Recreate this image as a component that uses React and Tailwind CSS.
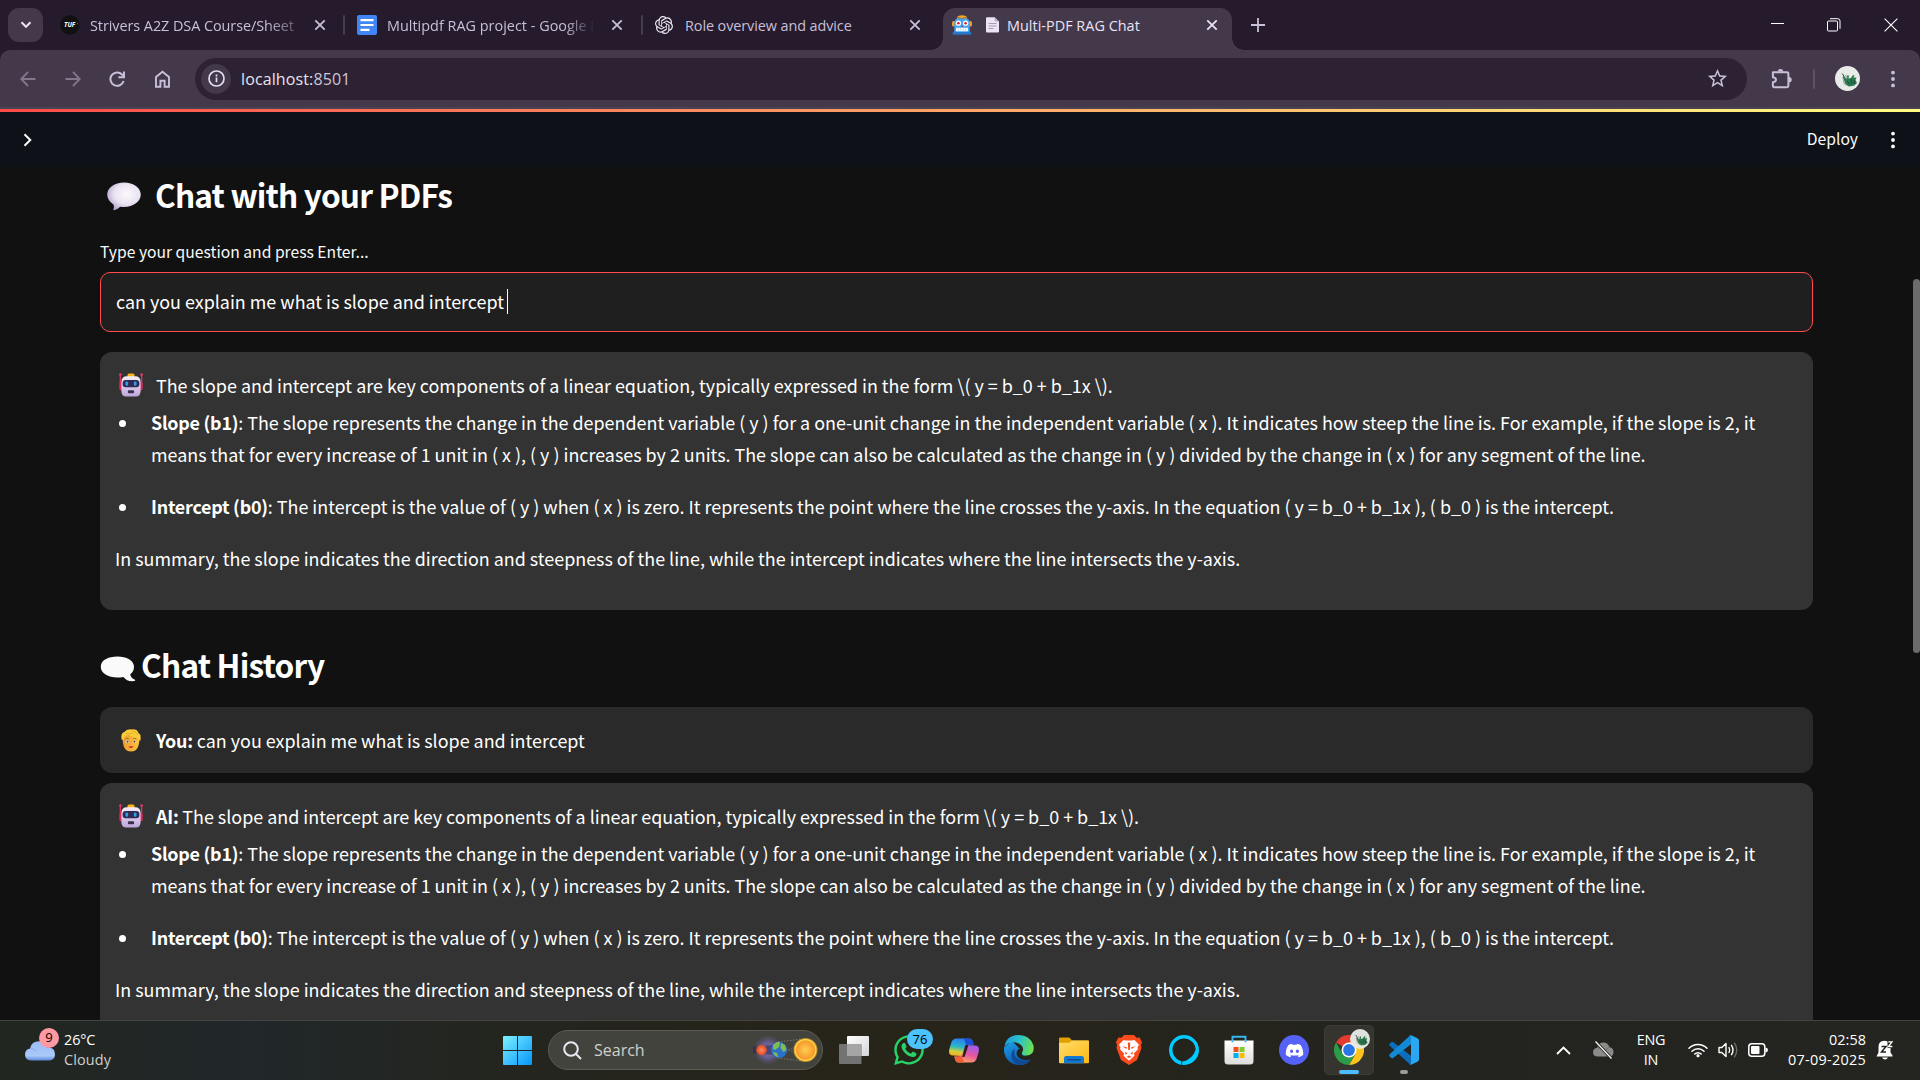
import React from "react";
import { FaDiscord, FaWhatsapp } from "react-icons/fa";
import { SiOpenai } from "react-icons/si";
import { MdStarBorder } from "react-icons/md";

const CloseX = ({ className = "" }) => (
  <svg className={`ml-auto shrink-0 ${className}`} width="12" height="12" viewBox="0 0 12 12" stroke="currentColor" strokeWidth="1.8" fill="none">
    <path d="M1.3 1.3 10.7 10.7M10.7 1.3 1.3 10.7" />
  </svg>
);

const DocsIcon = () => (
  <svg className="shrink-0" width="20" height="20" viewBox="0 0 20 20">
    <rect width="20" height="20" rx="2" fill="#4285f4" />
    <path d="M3.5 5.2h13M3.5 10h13M3.5 14.8h9" stroke="#fff" strokeWidth="2.2" />
  </svg>
);

const RobotFavicon = () => (
  <svg className="shrink-0" width="20" height="20" viewBox="0 0 20 20">
    <ellipse cx="10" cy="3" rx="5.2" ry="2.8" fill="#f2a32b" />
    <path d="M5.5 2.6q4.5 2 9 0" stroke="#5b4a35" strokeWidth=".8" fill="none" />
    <rect x="0" y="6" width="3.4" height="5.5" rx="1.6" fill="#f59a23" />
    <rect x="16.6" y="6" width="3.4" height="5.5" rx="1.6" fill="#f59a23" />
    <path d="M2.3 8q0-4.6 4-4.6h7.4q4 0 4 4.6v9H2.3z" fill="#42a5f5" />
    <path d="M.8 17h18.4v2.6H.8z" fill="#2479ce" />
    <circle cx="6.4" cy="8.2" r="2.6" fill="#fff" />
    <circle cx="13.6" cy="8.2" r="2.6" fill="#fff" />
    <circle cx="6.4" cy="8.2" r="1.3" fill="#d81b38" />
    <circle cx="13.6" cy="8.2" r="1.3" fill="#d81b38" />
    <path d="M9 12l1-1.8 1 1.8z" fill="#d81b38" />
    <rect x="4" y="12.8" width="12" height="3.4" rx=".8" fill="#fff" />
    <path d="M6.4 12.8v3.4M8.8 12.8v3.4M11.2 12.8v3.4M13.6 12.8v3.4" stroke="#8fb8dd" strokeWidth=".5" />
  </svg>
);

const PageGlyph = () => (
  <svg className="shrink-0" width="13" height="16" viewBox="0 0 13 16">
    <path d="M0 1.2Q0 .3 1 .3h7.6L13 4.6v9.8q0 1-1 1H1q-1 0-1-1z" fill="#ece4f4" />
    <path d="M8.6.3 13 4.6H8.6z" fill="#b9acc8" />
    <path d="M2.5 6.5h8M2.5 9h8M2.5 11.5h5" stroke="#a799b8" strokeWidth="1" />
  </svg>
);

const Avatar = ({ size }) => (
  <svg className="shrink-0" width={size} height={size} viewBox="0 0 25 25">
    <circle cx="12.5" cy="12.5" r="12.5" fill="#e9ebe9" />
    <path d="M10.5 18.500 8.800 14 7.500 11 9.500 10.500 11.500 13 12.500 9 14 9.800 13.500 12.500 16 12 17.500 9.500 19.500 9 18.500 11.500 21.500 11.500 20.500 14 22 17 19 19.800 14 20.500z" fill="#2c7a50" />
    <path d="M7 7.500q1.500 1 2 3.500M16 13l1 5M12 15l3 3.500M19 14l.5 4" stroke="#174c36" strokeWidth="1" fill="none" />
    <path d="M8.200 12.500l.8 4.500 2 2M10.500 9l1.500 3" stroke="#a0b0a8" strokeWidth="1.200" fill="none" />
  </svg>
);

const Dots = ({ className = "" }) => (
  <svg className={className} width="6" height="20" viewBox="0 0 6 20" fill="currentColor">
    <circle cx="3" cy="3.6" r="1.9" />
    <circle cx="3" cy="10" r="1.9" />
    <circle cx="3" cy="16.4" r="1.9" />
  </svg>
);

function TabStrip() {
  return (
    <div className="flex h-[50px] items-center bg-[#251b2d] pl-2 text-[14.4px] leading-5 text-[#cabfd8]">
      <div className="flex h-[34px] w-[35px] items-center justify-center rounded-[11px] bg-[#43394b]">
        <svg width="12" height="8" viewBox="0 0 12 8" fill="none" stroke="#eadff5" strokeWidth="2.1">
          <path d="M1.5 1.3 6 5.8l4.5-4.5" />
        </svg>
      </div>
      <div className="ml-[17px] flex w-[283px] items-center pr-[17px]">
        <svg className="shrink-0" width="20" height="20" viewBox="0 0 20 20">
          <circle cx="10" cy="10" r="9.8" fill="#111" />
          <text x="9.6" y="12.3" textAnchor="middle" fontSize="6.4" fontWeight="700" fontStyle="italic" fill="#fff" fontFamily="Open Sans">TUF</text>
          <path d="M17.3 8.2l1 1" stroke="#e0413a" strokeWidth="1" />
        </svg>
        <span className="ml-[10px] w-[206px] overflow-hidden whitespace-nowrap pt-px tracking-[-0.05px] [mask-image:linear-gradient(90deg,#000_85%,rgba(0,0,0,.35)_100%)]">Strivers A2Z DSA Course/Sheet</span>
        <CloseX />
      </div>
      <div className="h-5 w-[2px] rounded bg-[#463c50]" />
      <div className="flex w-[296px] items-center pl-[12px] pr-[18px]">
        <DocsIcon />
        <span className="ml-[10px] w-[208px] overflow-hidden whitespace-nowrap pt-px tracking-[0.02px] [mask-image:linear-gradient(90deg,#000_85%,transparent_100%)]">Multipdf RAG project - Google Docs</span>
        <CloseX />
      </div>
      <div className="h-5 w-[2px] rounded bg-[#463c50]" />
      <div className="flex w-[300px] items-center pl-[12px] pr-[22px]">
        <SiOpenai className="size-[18px] shrink-0 text-[#efeaf4]" />
        <span className="ml-[12px] whitespace-nowrap pt-px tracking-[-0.08px]">Role overview and advice</span>
        <CloseX />
      </div>
      <div className="relative mt-2 flex h-[42px] w-[289px] items-center rounded-t-[12px] bg-[#43394b] pb-2 pl-[9px] pr-[14px] text-[#ece1f6] before:absolute before:bottom-0 before:-left-3 before:size-3 before:bg-[radial-gradient(circle_at_0_0,transparent_11.5px,#43394b_12px)] after:absolute after:bottom-0 after:-right-3 after:size-3 after:bg-[radial-gradient(circle_at_100%_0,transparent_11.5px,#43394b_12px)]">
        <RobotFavicon />
        <span className="ml-[14px] flex items-center gap-2">
          <PageGlyph />
          <span className="whitespace-nowrap pt-px tracking-[0.03px]">Multi-PDF RAG Chat</span>
        </span>
        <CloseX />
      </div>
      <svg className="ml-[19px]" width="14" height="14" viewBox="0 0 14 14" stroke="#cabfd8" strokeWidth="1.8">
        <path d="M7 0v14M0 7h14" />
      </svg>
      <div className="ml-auto flex items-center text-white">
        <svg width="13" height="14" viewBox="0 0 13 14" stroke="currentColor" fill="none"><path d="M0 5.5h13" /></svg>
        <svg className="ml-[43px]" width="14" height="14" viewBox="0 0 14 14" stroke="currentColor" fill="none">
          <path d="M.5 4Q.5 3 1.5 3h8q1 0 1 1v8q0 1-1 1h-8q-1 0-1-1z" />
          <path d="M3 .7h7.8q2.2 0 2.2 2.2v8" />
        </svg>
        <svg className="ml-[43px] mr-[22px]" width="14" height="14" viewBox="0 0 14 14" stroke="currentColor" strokeWidth="1.1" fill="none">
          <path d="M.6.6l12.8 12.8M13.4.6.6 13.4" />
        </svg>
      </div>
    </div>
  );
}

function Toolbar() {
  return (
    <div className="bg-[#251b2d]">
      <div className="flex h-[59px] items-center rounded-t-[10px] border-b-2 border-[#4b4351] bg-[#43394b] pl-5 pr-[24px] text-[#cabfd8]">
        <svg className="text-[#81768b]" width="16" height="16" viewBox="0 0 16 16" fill="none" stroke="currentColor" strokeWidth="1.8">
          <path d="M15.5 8H1.5M8 1 1.2 8 8 15" />
        </svg>
        <svg className="ml-[29px] text-[#81768b]" width="16" height="16" viewBox="0 0 16 16" fill="none" stroke="currentColor" strokeWidth="1.8">
          <path d="M.5 8h14M8 1l6.8 7L8 15" />
        </svg>
        <svg className="ml-[28px]" width="16" height="16" viewBox="0 0 16 16" fill="none" stroke="currentColor" strokeWidth="2">
          <path d="M14.600 10A6.700 6.700 0 1 1 13 3.500l1.500 1.500" />
          <path d="M15 .4v5.800H9.400" />
        </svg>
        <svg className="ml-[29px]" width="17" height="18" viewBox="0 0 17 18" fill="none" stroke="currentColor" strokeWidth="1.9">
          <path d="M2 7l6.500-5.300L15 7v9.800h-4.400v-6H6.400v6H2z" />
        </svg>
        <div className="ml-[24px] flex h-[42px] w-[1552px] items-center rounded-full bg-[#2c2234] pl-[6px] pr-[18px]">
          <div className="flex size-[30px] items-center justify-center rounded-full bg-[#43394b]">
            <svg width="17" height="17" viewBox="0 0 17 17" fill="none" stroke="#e6dcf0" strokeWidth="1.7">
              <circle cx="8.5" cy="8.5" r="7.5" />
              <path d="M8.5 7.6v4.600M8.500 4.600v1.800" />
            </svg>
          </div>
          <span className="ml-[10px] pt-px text-[16px] leading-6 tracking-[0.12px] text-[#e8e2ee]">localhost:<span className="text-[#cdc5d6]">8501</span></span>
          <MdStarBorder className="ml-auto size-[23px] text-[#cabfd8]" />
        </div>
        <svg className="ml-[24px]" width="21" height="21" viewBox="0 0 21 21">
          <path d="M1.900 4.200H16q1.400 0 1.400 1.400v12.200q0 1.400-1.400 1.400H3.300q-1.400 0-1.400-1.400v-3.600Q5 13.600 5 11.700T1.900 9.200z" fill="none" stroke="currentColor" strokeWidth="2" strokeLinejoin="round" />
          <path d="M6.800 3.600a2.700 2.700 0 0 1 5.400 0zM18 9a2.700 2.700 0 0 1 0 5.400z" fill="currentColor" />
        </svg>
        <div className="ml-[21px] h-5 w-[2px] rounded bg-[#5d5266]" />
        <div className="ml-[20px]"><Avatar size={25} /></div>
        <Dots className="ml-auto" />
      </div>
    </div>
  );
}

const BotEmoji = () => (
  <svg className="shrink-0" width="24" height="24" viewBox="0 0 24 24">
    <defs>
      <linearGradient id="bot" x1="0" y1="0" x2="0" y2="1">
        <stop offset="0" stopColor="#f4eef8" />
        <stop offset="1" stopColor="#bfa5da" />
      </linearGradient>
    </defs>
    <path d="M1.300 1.500v10M22.700 1.500v10" stroke="#f0356c" strokeWidth="1.200" />
    <circle cx="1.400" cy="1.500" r="1.300" fill="#f0356c" />
    <circle cx="22.600" cy="1.500" r="1.300" fill="#f0356c" />
    <rect x=".3" y="9" width="4" height="8.500" rx="2" fill="#d92a62" />
    <rect x="19.700" y="9" width="4" height="8.500" rx="2" fill="#d92a62" />
    <rect x="8.400" y=".6" width="7.200" height="4" rx="1.600" fill="#f9b31c" />
    <path d="M2.400 9Q2.400 3.300 8 3.300h8q5.600 0 5.600 5.700v9q0 5.600-5 5.600H7.400q-5 0-5-5.600z" fill="url(#bot)" />
    <rect x="3.600" y="6.900" width="16.800" height="7.400" rx="3.200" fill="#322a52" />
    <rect x="6.500" y="8.400" width="2.600" height="4.300" rx="1.200" fill="#28a5ea" />
    <rect x="14.900" y="8.400" width="2.600" height="4.300" rx="1.200" fill="#28a5ea" />
    <rect x="8.800" y="17.300" width="6.400" height="3" rx="1.400" fill="#3b2f4f" />
  </svg>
);

const PersonEmoji = () => (
  <svg className="shrink-0" width="20" height="23" viewBox="0 0 20 23">
    <defs>
      <linearGradient id="face" x1="0" y1="0" x2="1" y2="0">
        <stop offset="0" stopColor="#ee9b2f" />
        <stop offset="1" stopColor="#fcc43a" />
      </linearGradient>
    </defs>
    <path d="M1.600 8Q1.200 22.600 10 22.600T18.400 8Q15 3 10 3T1.600 8z" fill="url(#face)" />
    <path d="M.6 10.500Q-.6 4 3.400 3Q5.600-.3 10.500.4Q16-.2 17.200 3.500Q20.600 5.500 19.300 12Q17.800 11.500 17.200 8.500Q11.500 9 7.500 5.800Q3 7 2.300 11z" fill="#f7cc38" />
    <path d="M5 4.500Q9 6 12 3.500M12 2Q16 3 17 6" stroke="#e0a322" strokeWidth=".8" fill="none" />
    <ellipse cx="6.300" cy="12.600" rx="1.600" ry="1.500" fill="#fff" />
    <ellipse cx="13.700" cy="12.600" rx="1.600" ry="1.500" fill="#fff" />
    <circle cx="6.500" cy="12.600" r="1.100" fill="#5b3a3a" />
    <circle cx="13.500" cy="12.600" r="1.100" fill="#5b3a3a" />
    <path d="M4.500 10Q6 9 7.800 9.800M12.200 9.800Q14 9 15.500 10" stroke="#a8641c" strokeWidth=".9" fill="none" />
    <path d="M7.300 17.600Q10 16.800 12.700 17.600Q10 20.600 7.300 17.600z" fill="#c62a45" />
  </svg>
);

const SpeechEmoji = () => (
  <svg className="shrink-0" width="34" height="29" viewBox="0 0 34 29">
    <defs>
      <radialGradient id="speech" cx=".58" cy=".42" r=".62">
        <stop offset="0" stopColor="#fbf9fd" />
        <stop offset=".6" stopColor="#eae3f2" />
        <stop offset="1" stopColor="#b7a6cf" />
      </radialGradient>
    </defs>
    <path d="M17 .4C26.500.4 33.800 5.600 33.800 12.600S26.500 25 17 25Q15 25 13.200 24.700Q10.500 27.600 7 28.200Q6 28.200 6.500 27Q7.400 24.500 6.400 22.400Q.2 18.500.2 12.600C.2 5.600 7.500.4 17 .4z" fill="url(#speech)" />
  </svg>
);

const LeftBubble = () => (
  <svg className="shrink-0" width="36" height="26" viewBox="0 0 36 26">
    <path d="M17.500.5C26.500.5 34 4.300 34 10.800Q34 15.500 30.300 18.300Q30.500 22 35 23.800Q35.600 24.600 34.500 25Q27 26 23.500 20.900Q20.500 21.400 17.500 21.400C8 21.400.8 17.500.8 10.800S8 .5 17.500.5z" fill="#fafafa" />
  </svg>
);

const B = ({ children }) => <strong className="font-bold tracking-[-0.24px]">{children}</strong>;

function Bullet({ children }) {
  return (
    <li className="mb-5 flex">
      <span className="ml-[4px] mt-[14px] size-[7px] shrink-0 rounded-full bg-white" />
      <span className="ml-[25px] whitespace-nowrap">{children}</span>
    </li>
  );
}

function Answer({ label }) {
  return (
    <div className="h-[258px] rounded-[12px] bg-[#333333] pl-[15px] pt-[17px] text-white">
      <div className="mb-[5px] flex h-8 whitespace-pre">
        <span className="ml-[4px] mr-[13px] mt-[4px]"><BotEmoji /></span>
        <span>{label && <B>{label} </B>}The slope and intercept are key components of a linear equation, typically expressed in the form \( y = b_0 + b_1x \).</span>
      </div>
      <ul>
        <Bullet>
          <B>Slope (b1)</B>: The slope represents the change in the dependent variable ( y ) for a one-unit change in the independent variable ( x ). It indicates how steep the line is. For example, if the slope is 2, it
          <br />
          means that for every increase of 1 unit in ( x ), ( y ) increases by 2 units. The slope can also be calculated as the change in ( y ) divided by the change in ( x ) for any segment of the line.
        </Bullet>
        <Bullet>
          <B>Intercept (b0)</B>: The intercept is the value of ( y ) when ( x ) is zero. It represents the point where the line crosses the y-axis. In the equation ( y = b_0 + b_1x ), ( b_0 ) is the intercept.
        </Bullet>
      </ul>
      <p>In summary, the slope indicates the direction and steepness of the line, while the intercept indicates where the line intersects the y-axis.</p>
    </div>
  );
}

function ChatPage() {
  return (
    <div className="flex h-[911px] flex-col overflow-hidden bg-[#111111] font-['Noto_Sans_CJK_SC',sans-serif] text-[17.92px] leading-8">
      <div className="h-[3px] shrink-0 bg-[linear-gradient(90deg,#ff4b4b,#fffd80)]" />
      <div className="-mb-px flex h-[55px] shrink-0 items-center bg-[#0e1117] pl-[23px] pr-[24px] text-[15.68px] leading-6 text-[#fafafa]">
        <svg width="9" height="14" viewBox="0 0 9 14" fill="none" stroke="currentColor" strokeWidth="2"><path d="M1.500 1.200 7.300 7 1.500 12.800" /></svg>
        <span className="ml-auto mr-[32px] pb-px">Deploy</span>
        <Dots />
      </div>
      <div className="flex min-h-0 flex-1 items-start justify-between">
        <main className="ml-[100px] w-[1713px]">
          <h2 className="mt-[8px] flex h-10 text-[31.6px] font-bold leading-10 tracking-[-0.82px] text-white">
            <span className="ml-[7px] mr-[14px] mt-[8px]"><SpeechEmoji /></span>
            Chat with your PDFs
          </h2>
          <p className="mt-[26px] text-[15.68px] leading-6 text-[#fafafa]">Type your question and press Enter...</p>
          <div className="mt-[8px] flex h-[60px] items-center rounded-[10px] border border-[#ff4b4b] bg-[#1f1f1f] pb-[2px] pl-[15px] text-white">
            <span>can you explain me what is slope and intercept</span>
            <span className="ml-[3px] h-[25px] w-px bg-white" />
          </div>
          <div className="mt-5"><Answer /></div>
          <h2 className="mt-[34px] flex h-10 text-[31.6px] font-bold leading-10 tracking-[-0.78px] text-white">
            <span className="mr-[5px] mt-[12px]"><LeftBubble /></span>
            Chat History
          </h2>
          <div className="mt-[23px] flex h-[66px] rounded-[12px] bg-[#2a2a2a] pl-[21px] pt-[17px] text-white">
            <span className="mr-[15px] mt-[5px]"><PersonEmoji /></span>
            <span><B>You:</B> can you explain me what is slope and intercept</span>
          </div>
          <div className="mt-[10px]"><Answer label="AI:" /></div>
        </main>
        <div className="mt-[113px] h-[374px] w-[7px] rounded-full bg-[#6b6b6b]" />
      </div>
    </div>
  );
}

const WindowsIcon = () => (
  <svg width="29" height="29" viewBox="0 0 29 29">
    <defs>
      <linearGradient id="win" gradientUnits="userSpaceOnUse" x1="0" y1="0" x2="29" y2="29">
        <stop offset="0" stopColor="#7df1ff" />
        <stop offset="1" stopColor="#0595fb" />
      </linearGradient>
    </defs>
    <path d="M0 1q0-1 1-1h13v14H0zM15 0h13q1 0 1 1v13H15zM0 15h14v14H1q-1 0-1-1zM15 15h14v13q0 1-1 1H15z" fill="url(#win)" />
  </svg>
);

const PlanetArt = () => (
  <svg className="ml-auto" width="67" height="32" viewBox="0 0 67 32">
    <defs>
      <radialGradient id="sun"><stop offset="0" stopColor="#ffce54" /><stop offset="1" stopColor="#f59325" /></radialGradient>
      <radialGradient id="mars"><stop offset="0" stopColor="#ff8a5c" /><stop offset="1" stopColor="#dd4a25" /></radialGradient>
      <radialGradient id="haze"><stop offset="0" stopColor="#7a70bd" /><stop offset=".5" stopColor="#6f66a8" stopOpacity=".8" /><stop offset="1" stopColor="#5a5485" stopOpacity="0" /></radialGradient>
    </defs>
    <ellipse cx="16" cy="16" rx="15" ry="15" fill="url(#haze)" />
    <path d="M1 12.500 24 11v10L1 19.500z" fill="#2b2748" opacity=".55" />
    <path d="M26 8 50 5M26 24 50 27M34 14l10 6M34 18l10-6" stroke="#8a8a85" strokeWidth=".7" strokeDasharray="1.500 1.500" />
    <circle cx="9.500" cy="16" r="5.300" fill="url(#mars)" />
    <circle cx="27" cy="16" r="8" fill="#2a72c8" />
    <path d="M21 11q4-4 7-3l-1 5-4 3-2-1zM29 9l4 2 1.500 5-3 2-3-4zM21 18l4 1 1 4-2-.5q-3-2-3-4.500z" fill="#82bb52" />
    <circle cx="53.500" cy="16" r="12" fill="#ffb923" opacity=".65" />
    <circle cx="53.500" cy="16" r="10.400" fill="url(#sun)" stroke="#ffd84c" strokeWidth="1.200" />
  </svg>
);

const TaskViewIcon = () => (
  <svg width="30" height="28" viewBox="0 0 30 28">
    <defs><linearGradient id="tv" x1="0" y1="0" x2="1" y2="1"><stop offset="0" stopColor="#fff" /><stop offset="1" stopColor="#d5d5d5" /></linearGradient></defs>
    <rect x="8" y="0" width="22" height="20" rx="1" fill="url(#tv)" />
    <rect x="0" y="8" width="22.500" height="20" rx="1" fill="#737373" />
    <path d="M8 8h14.500v12H8z" fill="#a5a5a5" />
  </svg>
);

const CopilotIcon = () => (
  <svg width="30" height="27" viewBox="0 0 30 27">
    <defs>
      <linearGradient id="cp1" x1=".4" y1="0" x2=".2" y2="1"><stop offset="0" stopColor="#2d7df0" /><stop offset=".45" stopColor="#25b7c8" /><stop offset=".75" stopColor="#d8cf35" /><stop offset="1" stopColor="#f5a623" /></linearGradient>
      <linearGradient id="cp2" x1=".7" y1="0" x2=".3" y2="1"><stop offset="0" stopColor="#9b5cf0" /><stop offset=".5" stopColor="#e556a0" /><stop offset="1" stopColor="#ffa85c" /></linearGradient>
    </defs>
    <path d="M7.500 1.500h13q2.500 0 3.200 2.500l1 3.500H20q-2.500 0-3.300 2.600L14 19h-2L4 18.500q-4 0-4-4 0-2 2.500-9.500 1.500-3.500 5-3.500z" fill="url(#cp1)" />
    <path d="M15 1.500h5.500q2.500 0 3.200 2.500l1 3.500H20q-2 0-2.600 1.500z" fill="#1c4fd6" />
    <path d="M22.500 25.500h-13q-2.500 0-3.200-2.500L5.300 19.500H10q2.500 0 3.300-2.600L16 8h2l8 .5q4 0 4 4 0 2-2.500 9.500-1.500 3.500-5 3.500z" fill="url(#cp2)" />
    <path d="M15 25.500H9.500Q7 25.500 6.300 23L5.300 19.500H10q2 0 2.600-1.500z" fill="#f2603a" />
    <path d="M16.300 8h3.200l-4 12h-2.200z" fill="#24231c" />
  </svg>
);

const EdgeIcon = () => (
  <svg width="30" height="30" viewBox="0 0 30 30">
    <defs>
      <linearGradient id="ed1" x1="0" y1=".3" x2="1" y2=".5"><stop offset="0" stopColor="#1e9be0" /><stop offset=".5" stopColor="#2dc2c9" /><stop offset="1" stopColor="#6ce24b" /></linearGradient>
      <linearGradient id="ed2" x1="0" y1="0" x2=".4" y2="1"><stop offset="0" stopColor="#1fa2ea" /><stop offset="1" stopColor="#0a5cb4" /></linearGradient>
    </defs>
    <path d="M.3 12A15 15 0 0 0 15 30Q21 30 25 26.500L17 15 8 6z" fill="url(#ed2)" />
    <path d="M.4 12Q2 0 15 0q11 0 14.500 10.500 1.500 9.500-6.500 10-6 0-5-3.500 2.500-3-.5-6.500Q13 6.500 7.500 7.500 2 9 .4 12z" fill="url(#ed1)" />
    <path d="M11 13.500q-2.500 8 4.500 11.500 6.500 2 12-1.500Q23 31 14.500 30 6.500 27 7.500 18.500 8.500 15 11 13.500z" fill="#114a93" />
    <path d="M18 17.500q-1 3 2 3.500 4.500 1 8-1.200l1 1.200-2 3q-6 2.300-11.500-.4-4-3-2.500-7.500 1.500-3 4-2 1.800 1.400 1 3.400z" fill="#24231c" />
  </svg>
);

const FolderIcon = () => (
  <svg width="30" height="27" viewBox="0 0 30 27">
    <defs><linearGradient id="fo" x1="0" y1="0" x2="1" y2="1"><stop offset="0" stopColor="#ffdc6b" /><stop offset="1" stopColor="#fdb913" /></linearGradient></defs>
    <path d="M0 1.500Q0 .4 1.200.4h9l3 3.100H29q1 0 1 1V12H0z" fill="#e0a000" />
    <path d="M0 5.800h10.200l3-2.300H29q1 0 1 1v20.800q0 1-1 1H1q-1 0-1-1z" fill="url(#fo)" />
    <path d="M5 26.300v-5q0-2.300 2.300-2.300h15.400q2.300 0 2.300 2.300v5z" fill="#1379cf" />
    <path d="M9 22.800h12" stroke="#0a4d91" strokeWidth="1.500" strokeLinecap="round" />
  </svg>
);

const AlexaIcon = () => (
  <svg width="30" height="30" viewBox="0 0 30 30">
    <circle cx="15" cy="15" r="13.300" fill="none" stroke="#00caff" strokeWidth="3.400" />
    <path d="M4 10A12 12 0 0 0 12.800 26.300V30Q4 28 1 20z" fill="#00caff" />
    <path d="M26.500 15Q24 23.500 14 26.700q-.8.300-.8 1V30Q25 30 28.500 19z" fill="#00caff" />
    <path d="M12.700 25.500V30" stroke="#24231c" strokeWidth=".8" />
  </svg>
);

const StoreIcon = () => (
  <svg width="30" height="30" viewBox="0 0 30 30">
    <defs><linearGradient id="st" x1="0" y1="0" x2="0" y2="1"><stop offset="0" stopColor="#fff" /><stop offset="1" stopColor="#dcdcdc" /></linearGradient></defs>
    <path d="M8.500 7V1.800h13V7" fill="none" stroke="#37b5ef" strokeWidth="1.900" />
    <path d="M.5 5.500h29v20.500q0 3.500-3.500 3.500H4Q.5 29.500.5 26z" fill="url(#st)" />
    <path d="M8.500 5.300v2M21.500 5.300v2" stroke="#37b5ef" strokeWidth="1.900" />
    <path d="M9.500 12h5v5h-5z" fill="#f1511b" /><path d="M15.500 12h5v5h-5z" fill="#80cc28" />
    <path d="M9.500 18h5v5h-5z" fill="#00adef" /><path d="M15.500 18h5v5h-5z" fill="#fbbc09" />
  </svg>
);

const ChromeIcon = () => (
  <svg width="30" height="30" viewBox="0 0 30 30">
    <path d="M15 15 2 7.500A15 15 0 0 1 28 7.500z" fill="#e33b2e" />
    <path d="M15 7.500h13A15 15 0 0 1 15 30l6.500-11.200z" fill="#fcc31e" />
    <path d="M2 7.500 8.500 18.800 15 22.500 21.500 18.800 15 30A15 15 0 0 1 2 7.500z" fill="#2a9b47" />
    <circle cx="15" cy="15" r="7.500" fill="#fff" />
    <circle cx="15" cy="15" r="5.900" fill="#2a75e6" />
  </svg>
);

const VSCodeIcon = () => (
  <svg width="30" height="30" viewBox="0 0 30 30">
    <path d="M1 8.300 2.500 7q.8-.6 1.600 0L22 20.800V29.500q-1 0-1.800-.8L.9 11q-1.300-1.300.1-2.700z" fill="#0a6ebc" />
    <path d="M1 21.700 2.500 23q.8.600 1.600 0L22 9.200V.5q-1 0-1.800.8L.9 19q-1.300 1.300.1 2.700z" fill="#128bd6" />
    <path d="M22 .2 28.500 3.300Q30 4 30 5.500v19q0 1.500-1.500 2.200L22 29.800q-1 .2-1.800-.8 1.600.8 1.800-1.500v-25Q21.800.2 20.200 1 21 0 22 .2z" fill="#2aa6f2" />
  </svg>
);

const BraveIcon = () => (
  <svg width="26" height="30" viewBox="0 0 26 30">
    <path d="M8 0h10l2.500 2.800 3-.3L26 7l-1 3 .5 3L21 25l-8 5-8-5L.5 13 1 10 0 7l2.500-4.500 3 .3z" fill="#fb4a1c" />
    <path d="M7.500 5 10 5.600h6L18.500 5 23 9.800l-1.500 2.700.4 1.700-4 4.300.6 2.200L13 25.800 7.500 20.700l.6-2.200-4-4.300.4-1.700L3 9.800z" fill="#fff" />
    <path d="M6.300 11.200l4.500 1-.3 1.700zM19.700 11.200l-4.500 1 .3 1.700zM11.800 7.500h2.400l-.4 7.500h-1.600zM9 16.800l2.600 1.400-2 1.500zM17 16.800l-2.600 1.400 2 1.500zM10.500 22l2.500-1.500 2.500 1.500-2.500 1z" fill="#fb4a1c" />
  </svg>
);

const Cell = ({ children }) => <div className="flex h-[50px] w-[55px] items-center justify-center">{children}</div>;

function Taskbar() {
  return (
    <div className="flex h-[60px] items-center border-t border-[#454642] bg-[linear-gradient(90deg,#222620_0%,#21272a_13%,#23251f_25%,#272419_45%,#26241b_56%,#23241f_75%,#242520_100%)] pb-px text-[14.4px] leading-5 text-white">
      <div className="flex w-[503px] items-center pl-[25px]">
        <div className="relative mt-[1px]">
          <svg width="30" height="20" viewBox="0 0 30 20">
            <defs><linearGradient id="cl" x1="0" y1="0" x2="0" y2="1"><stop offset="0" stopColor="#9dbdf5" /><stop offset=".75" stopColor="#a9c9fa" /><stop offset="1" stopColor="#5f88d8" /></linearGradient></defs>
            <path d="M6 19.500Q0 19 0 13.300 0 8.500 5 7.500 6.500.3 14 .3q6.500 0 8.200 6Q30 6.500 30 13.200q0 6-6 6.300z" fill="url(#cl)" />
            <path d="M5 7.500q4 0 6 2.500" stroke="#86abea" fill="none" />
          </svg>
          <span className="absolute -top-[13px] left-[14px] flex size-[20px] items-center justify-center rounded-full bg-[#ff99a4] text-[13px] leading-none text-black">9</span>
        </div>
        <div className="ml-[9px] pb-px">
          <div className="tracking-[-0.1px]">26°C</div>
          <div className="tracking-[0.15px] text-[#cfcfcc]">Cloudy</div>
        </div>
      </div>
      <WindowsIcon />
      <div className="ml-4 flex h-10 w-[275px] items-center rounded-full border border-[#5c5b55] bg-[#43433d] pl-[14px] pr-[3px]">
        <svg width="19" height="19" viewBox="0 0 19 19" fill="none" stroke="#e8e8f0" strokeWidth="2"><circle cx="8" cy="8" r="6.800" /><path d="M12.800 12.800 18 18" /></svg>
        <span className="ml-[12px] text-[16px] text-[#d0d0cc]">Search</span>
        <PlanetArt />
      </div>
      <div className="ml-[3.500px] flex">
        <Cell><TaskViewIcon /></Cell>
        <Cell>
          <div className="relative">
            <FaWhatsapp className="size-[34px] text-[#27d366]" />
            <span className="absolute -top-[4px] left-[15px] flex h-5 w-[26px] items-center justify-center rounded-full bg-[#4cc2ff] text-[13px] leading-none text-black">76</span>
          </div>
        </Cell>
        <Cell><CopilotIcon /></Cell>
        <Cell><EdgeIcon /></Cell>
        <Cell><FolderIcon /></Cell>
        <Cell><BraveIcon /></Cell>
        <Cell><AlexaIcon /></Cell>
        <Cell><StoreIcon /></Cell>
        <Cell>
          <div className="flex size-[30px] items-center justify-center rounded-full bg-[#5662f6]"><FaDiscord className="size-[19px] text-white" /></div>
        </Cell>
        <Cell>
          <div className="relative flex size-[50px] items-center justify-center rounded-[5px] border border-[#3c3b35] bg-[#35342e]">
            <ChromeIcon />
            <div className="absolute left-[25px] top-[3px] opacity-95"><Avatar size={20} /></div>
            <div className="absolute bottom-0 h-1 w-5 rounded-full bg-[#4cbcff]" />
          </div>
        </Cell>
        <Cell>
          <div className="relative flex size-[50px] items-center justify-center">
            <VSCodeIcon />
            <div className="absolute bottom-px h-1 w-2 rounded-full bg-[#9b9b98]" />
          </div>
        </Cell>
      </div>
      <div className="ml-auto flex items-center pr-[26px]">
        <svg width="15" height="9" viewBox="0 0 15 9" fill="none" stroke="#fff" strokeWidth="1.800"><path d="M1 8l6.500-6.500L14 8" /></svg>
        <svg className="ml-[22px]" width="21" height="18" viewBox="0 0 21 18">
          <path d="M5 15.500q-5 0-5-4.300 0-4 4.200-4.500Q5.500 1.500 10.500 1.500q4.500 0 6 4.700Q20.500 6.700 20.500 11q0 4.500-4.500 4.500z" fill="#8b8b89" />
          <path d="M4.200 6.700Q8 6.500 11 9.500L16.500 6.200" stroke="#6c6c6a" fill="none" />
          <path d="M2.500.5 18.500 17.500" stroke="#24241f" strokeWidth="3" />
          <path d="M2.500.5 18.500 17.500" stroke="#fff" strokeWidth="1.200" />
        </svg>
        <div className="ml-[22px] w-[30px] text-center tracking-[-0.25px]">ENG<br />IN</div>
        <svg className="ml-[22px]" width="20" height="16" viewBox="0 0 20 16" fill="none" stroke="#fff" strokeWidth="1.500" strokeLinecap="round">
          <path d="M1 6.300a12.700 12.700 0 0 1 18 0M4 9.300a8.500 8.500 0 0 1 12 0M6.800 12a4.500 4.500 0 0 1 6.400 0" />
          <circle cx="10" cy="13.700" r="1.600" fill="#fff" stroke="none" />
        </svg>
        <svg className="ml-[10px]" width="20" height="16" viewBox="0 0 20 16" fill="none" stroke="#fff" strokeWidth="1.400" strokeLinecap="round" strokeLinejoin="round">
          <path d="M1 5.500h2.800L8 1.500v13l-4.200-4H1z" />
          <path d="M11 5.500q1.500 2.500 0 5M13.500 3.300q3 4.700 0 9.400" />
          <path d="M16.500 1.200q4.500 6.800 0 13.600" stroke="#6a6a66" />
        </svg>
        <svg className="ml-[10px]" width="20" height="14" viewBox="0 0 20 14">
          <rect x=".8" y=".8" width="16" height="12.400" rx="3" fill="none" stroke="#fff" strokeWidth="1.500" />
          <rect x="3" y="3" width="8.500" height="8" rx="1" fill="#fff" />
          <path d="M17.500 4.500q2.500.2 2.500 2.500t-2.500 2.500z" fill="#fff" />
        </svg>
        <div className="ml-[18px] w-[80px] text-right"><span className="tracking-[0.05px]">02:58</span><br /><span className="tracking-[0.3px]">07-09-2025</span></div>
        <svg className="ml-[10px]" width="18" height="20" viewBox="0 0 18 20">
          <path d="M1 15.500 2.500 12.500V7Q2.500.8 8.500.8T14.500 7v5.500L16.500 15.500v1H.5z" fill="#fff" />
          <path d="M6 17.500h6q-1 2-3 2t-3-2z" fill="#fff" />
          <path d="M11.500.5h6.500v7.500h-6.500z" fill="#24241f" />
          <path d="M5.500 6.500h4.500L5.500 12h4.500" fill="none" stroke="#24241f" strokeWidth="1.500" />
          <path d="M12.300 1.800h3.700l-3.700 4.700h4" fill="none" stroke="#fff" strokeWidth="1.300" />
        </svg>
      </div>
    </div>
  );
}

export default function App() {
  return (
    <div className="h-[1080px] w-[1920px] overflow-hidden bg-[#111111] font-['Open_Sans','Noto_Sans',sans-serif]">
      <TabStrip />
      <Toolbar />
      <ChatPage />
      <Taskbar />
    </div>
  );
}
